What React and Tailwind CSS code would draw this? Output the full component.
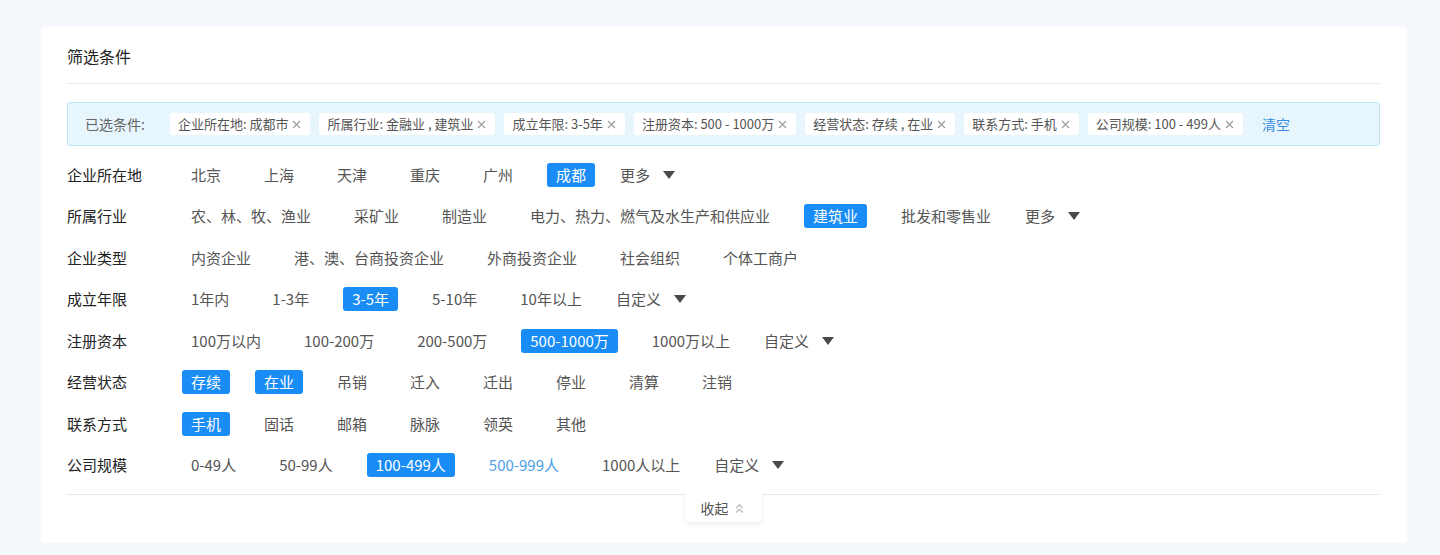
import { ChevronsUp } from 'lucide-react';

// Filter panel: selected-conditions bar + option rows

const selectedTags = [
  '企业所在地: 成都市',
  '所属行业: 金融业 , 建筑业',
  '成立年限: 3-5年',
  '注册资本: 500 - 1000万',
  '经营状态: 存续 , 在业',
  '联系方式: 手机',
  '公司规模: 100 - 499人',
];

const rows = [
  { label: '企业所在地', options: ['北京', '上海', '天津', '重庆', '广州', '成都'], active: ['成都'], more: '更多' },
  {
    label: '所属行业',
    options: ['农、林、牧、渔业', '采矿业', '制造业', '电力、热力、燃气及水生产和供应业', '建筑业', '批发和零售业'],
    active: ['建筑业'],
    more: '更多',
  },
  { label: '企业类型', options: ['内资企业', '港、澳、台商投资企业', '外商投资企业', '社会组织', '个体工商户'], active: [] },
  { label: '成立年限', options: ['1年内', '1-3年', '3-5年', '5-10年', '10年以上'], active: ['3-5年'], more: '自定义' },
  { label: '注册资本', options: ['100万以内', '100-200万', '200-500万', '500-1000万', '1000万以上'], active: ['500-1000万'], more: '自定义' },
  { label: '经营状态', options: ['存续', '在业', '吊销', '迁入', '迁出', '停业', '清算', '注销'], active: ['存续', '在业'] },
  { label: '联系方式', options: ['手机', '固话', '邮箱', '脉脉', '领英', '其他'], active: ['手机'] },
  { label: '公司规模', options: ['0-49人', '50-99人', '100-499人', '500-999人', '1000人以上'], active: ['100-499人'], hover: '500-999人', more: '自定义' },
];

function Caret() {
  return (
    <svg width="12" height="8" viewBox="0 0 12 8" className="ml-[13px]">
      <polygon points="0,0 12,0 6,8" fill="#4a4a4a" />
    </svg>
  );
}

function CloseX() {
  return (
    <svg width="9" height="9" viewBox="0 0 9 9" className="ml-[4px]">
      <path d="M1 1 L8 8 M8 1 L1 8" stroke="#9a9a9a" strokeWidth="1.1" />
    </svg>
  );
}

function FilterRow({ row }) {
  return (
    <div className="flex items-center h-[41.5px]">
      <div className="w-[115px] shrink-0 text-[15px] text-[#222]">{row.label}</div>
      <div className="flex items-center gap-[25px]">
        {row.options.map((opt) => {
          const on = row.active.includes(opt);
          const hov = row.hover === opt;
          return (
            <span
              key={opt}
              className={
                on
                  ? 'h-6 px-[9px] flex items-center rounded-[3px] bg-[#1a8cf5] text-white text-[15px]'
                  : hov
                  ? 'h-6 px-[9px] flex items-center text-[15px] text-[#4ba0e6]'
                  : 'h-6 px-[9px] flex items-center text-[15px] text-[#555]'
              }
            >
              {opt}
            </span>
          );
        })}
        {row.more && (
          <span className="flex items-center text-[15px] text-[#555]">
            {row.more}
            <Caret />
          </span>
        )}
      </div>
    </div>
  );
}

export default function App() {
  return (
    <div
      className="min-h-[555px] bg-[#f5f8fd] pt-[27px] pl-[41px] pr-[33px]"
      style={{ fontFamily: '"Noto Sans CJK SC", "Noto Sans", sans-serif' }}
    >
      <div className="bg-white rounded-[3px] pl-[26px] pr-[27px] h-[516px]">
        {/* header */}
        <div className="h-[57px] flex items-center pt-[2px] border-b border-[#ececec] text-[16px] text-[#222]">
          筛选条件
        </div>

        {/* selected conditions */}
        <div className="mt-[18px] h-[44px] flex items-center pl-[17px] pr-[18px] bg-[#e7f5fd] border border-[#bfe2f5] rounded-[3px]">
          <span className="text-[14px] text-[#666] mr-[25px]">已选条件:</span>
          <div className="flex items-center gap-[9px]">
            {selectedTags.map((t) => (
              <span
                key={t}
                className="h-[22px] flex items-center pl-[8px] pr-[9px] bg-white rounded-[3px] text-[13px] text-[#555]"
              >
                {t}
                <CloseX />
              </span>
            ))}
            <span className="ml-[10px] text-[14px] text-[#3d8fe0]">清空</span>
          </div>
        </div>

        {/* option rows */}
        <div className="mt-[8px]">
          {rows.map((r) => (
            <FilterRow key={r.label} row={r} />
          ))}
        </div>

        {/* collapse */}
        <div className="mt-[8px] border-t border-[#e6e6e6] flex justify-center">
          <div className="-mt-px w-[77px] h-[28px] flex items-center justify-center gap-[3px] bg-white rounded-b-[4px] shadow-[0_2px_4px_rgba(0,0,0,0.08)] text-[14px] text-[#555]">
            收起
            <ChevronsUp size={15} color="#b5b5b5" strokeWidth={1.8} />
          </div>
        </div>
      </div>
    </div>
  );
}
